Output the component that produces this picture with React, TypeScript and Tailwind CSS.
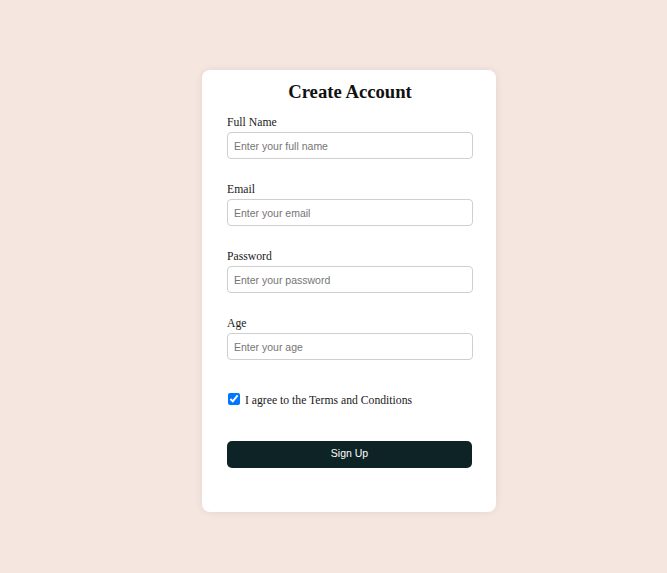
import { useState } from 'react';

const fields = [
  { id: 'fullName', label: 'Full Name', type: 'text', placeholder: 'Enter your full name' },
  { id: 'email', label: 'Email', type: 'email', placeholder: 'Enter your email' },
  { id: 'password', label: 'Password', type: 'password', placeholder: 'Enter your password' },
  { id: 'age', label: 'Age', type: 'number', placeholder: 'Enter your age' },
];

export default function App() {
  const [agreed, setAgreed] = useState(true);

  return (
    <div className="min-h-[573px] bg-[#f5e6df] pt-[70px] pl-[202px] font-['Liberation_Serif',serif]">
      <form
        className="w-[294px] rounded-lg bg-white pl-[25px] pt-2 pb-[44px] shadow-[0_0_8px_rgba(0,0,0,0.08)]"
        onSubmit={(e) => e.preventDefault()}
      >
        <h1 className="pr-[23px] text-center text-[18.7px] leading-[27px] font-bold text-[#111]">Create Account</h1>

        <div className="mt-[9px] flex flex-col gap-[22px]">
          {fields.map((f) => (
            <div key={f.id} className="flex flex-col">
              <label htmlFor={f.id} className="text-[11.7px] leading-[18px] text-[#1a1a1a]">
                {f.label}
              </label>
              <input
                id={f.id}
                type={f.type}
                placeholder={f.placeholder}
                className="h-[27px] w-[246px] rounded-[4px] border border-[#cfcfcf] px-[6px] font-['Liberation_Sans',sans-serif] text-[10.5px] text-[#222] outline-none placeholder:text-[#757575]"
              />
            </div>
          ))}
        </div>

        <label className="mt-[32px] flex items-start gap-[5px] pl-px text-[11.7px] leading-[18px] text-[#1a1a1a]">
          <input
            type="checkbox"
            checked={agreed}
            onChange={(e) => setAgreed(e.target.checked)}
            className="m-0 mt-[1px] h-[12px] w-[12px]"
          />
          I agree to the Terms and Conditions
        </label>

        <button
          type="submit"
          className="mt-[30.5px] h-[27px] w-[245px] rounded-[5px] bg-[#0e2326] font-['Liberation_Sans',sans-serif] text-[10.5px] text-white"
        >
          Sign Up
        </button>
      </form>
    </div>
  );
}
